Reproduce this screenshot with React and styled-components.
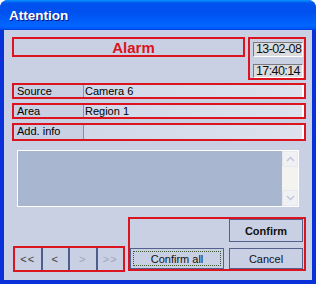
import React from 'react'
import styled, { createGlobalStyle } from 'styled-components'

const GlobalStyle = createGlobalStyle`
  body {
    margin: 0;
    background: #ffffff;
    font-family: "Liberation Sans", Arial, sans-serif;
  }
`

const RED = '#dc1420'
const BG = '#c9d0e3'

const Window = styled.div`
  width: 316px;
  height: 284px;
  display: flex;
  flex-direction: column;
  border-radius: 8px 8px 0 0;
  overflow: hidden;
  background: #0831d9;
`

const TitleBar = styled.div`
  height: 30px;
  flex: none;
  display: flex;
  align-items: center;
  padding: 1px 0 0 9px;
  box-sizing: border-box;
  background: linear-gradient(180deg, #0997ff 0%, #0053ee 10%, #0050ee 40%, #0066ff 85%, #005bff 94%, #003dd7 100%);
  color: #fff;
  font-weight: bold;
  font-size: 13.5px;
  text-shadow: 1px 1px #0f1089;
`

const Client = styled.div`
  flex: 1;
  margin: 0 4px 4px;
  background: ${BG};
  display: flex;
  flex-direction: column;
  padding: 7px 6px 9px 8px;
  font-size: 11px;
  color: #000;
`

const TopRow = styled.div`
  display: flex;
  gap: 3px;
  height: 43px;
`

const AlarmBox = styled.div`
  width: 233px;
  height: 20px;
  box-sizing: border-box;
  border: 2px solid ${RED};
  display: flex;
  align-items: center;
  justify-content: center;
  padding-left: 10px;
  color: ${RED};
  font-weight: bold;
  font-size: 15px;
`

const DateBox = styled.div`
  flex: 1;
  box-sizing: border-box;
  border: 2px solid ${RED};
  display: flex;
  flex-direction: column;
  gap: 7px;
  padding: 3px 1px 0 3px;
`

const DateField = styled.div`
  height: 15px;
  box-sizing: border-box;
  border-top: 1px solid #7a7a7a;
  border-left: 1px solid #7a7a7a;
  border-right: 1px solid #ffffff;
  border-bottom: 1px solid #ffffff;
  background: #dadbdf;
  font-size: 12.5px;
  letter-spacing: -0.6px;
  line-height: 13px;
  padding-left: 2px;
  white-space: nowrap;
  overflow: hidden;
  color: #111;
`

const Rows = styled.div`
  display: flex;
  flex-direction: column;
  gap: 4px;
  margin-top: 3px;
`

const Row = styled.div`
  height: ${p => p.$h}px;
  box-sizing: border-box;
  border: 2px solid ${RED};
  display: grid;
  grid-template-columns: 69px 1fr;
`

const Label = styled.div`
  padding-left: 3px;
  line-height: 12px;
`

const Value = styled.div`
  border-left: 1px solid #8e8f96;
  border-right: 2px solid #ffffff;
  background: linear-gradient(90deg, #d2d8e8 0%, #dde2ee 100%);
  padding-left: 1px;
  line-height: 12px;
`

const Memo = styled.div`
  margin: 9px 7px 0 5px;
  height: 57px;
  box-sizing: border-box;
  border: 1px solid #ffffff;
  background: #a9b6cf;
  display: flex;
  justify-content: flex-end;
`

const ScrollBar = styled.div`
  width: 16px;
  background: #f3f3ef;
  display: flex;
  flex-direction: column;
  justify-content: space-between;
`

const ScrollButton = styled.div`
  height: 16px;
  box-sizing: border-box;
  border: 1px solid #e6e8ee;
  border-radius: 2px;
  background: #f0f1f5;
  display: flex;
  align-items: center;
  justify-content: center;
`

const BottomRow = styled.div`
  margin-top: auto;
  display: flex;
  align-items: flex-end;
  gap: 3px;
  padding-left: 1px;
`

const NavGroup = styled.div`
  width: 112px;
  height: 26px;
  box-sizing: border-box;
  border: 2px solid ${RED};
  display: flex;
  margin-bottom: -1px;
`

const NavButton = styled.div`
  flex: 1;
  display: flex;
  align-items: center;
  justify-content: center;
  border-left: 2px solid #4d5e8c;
  &:first-child { border-left: none; }
  color: ${p => (p.$disabled ? '#9ea6ba' : '#3c3c3c')};
  font-size: 11px;
  letter-spacing: 1px;
`

const ActionGroup = styled.div`
  width: 178px;
  height: 54px;
  box-sizing: border-box;
  border: 2px solid ${RED};
  padding-right: 1px;
  display: grid;
  grid-template-columns: 94px 74px;
  grid-template-rows: 23px 21px;
  column-gap: 5px;
  row-gap: 6px;
`

const Button = styled.div`
  grid-column: ${p => p.$col};
  grid-row: ${p => p.$row};
  box-sizing: border-box;
  border: 1px solid #52628c;
  display: flex;
  align-items: center;
  justify-content: center;
  font-size: 11px;
  font-weight: ${p => (p.$bold ? 'bold' : 'normal')};
  color: #111;
  position: relative;
  ${p => p.$focus && `
    &::after {
      content: '';
      position: absolute;
      inset: 2px;
      border: 1px dotted #3d5a2e;
    }
  `}
`

const Chevron = ({ up }) => (
  <svg width="9" height="6" viewBox="0 0 9 6">
    <path d={up ? 'M1 5 L4.5 1.5 L8 5' : 'M1 1 L4.5 4.5 L8 1'} fill="none" stroke="#c4cad8" strokeWidth="1.6" />
  </svg>
)

const App = () => (
  <>
    <GlobalStyle />
    <Window>
      <TitleBar>Attention</TitleBar>
      <Client>
        <TopRow>
          <AlarmBox>Alarm</AlarmBox>
          <DateBox>
            <DateField>13-02-08</DateField>
            <DateField>17:40:14</DateField>
          </DateBox>
        </TopRow>
        <Rows>
          <Row $h={16}><Label>Source</Label><Value>Camera 6</Value></Row>
          <Row $h={16}><Label>Area</Label><Value>Region 1</Value></Row>
          <Row $h={18}><Label>Add. info</Label><Value /></Row>
        </Rows>
        <Memo>
          <ScrollBar>
            <ScrollButton><Chevron up /></ScrollButton>
            <ScrollButton><Chevron /></ScrollButton>
          </ScrollBar>
        </Memo>
        <BottomRow>
          <NavGroup>
            <NavButton>&lt;&lt;</NavButton>
            <NavButton>&lt;</NavButton>
            <NavButton $disabled>&gt;</NavButton>
            <NavButton $disabled>&gt;&gt;</NavButton>
          </NavGroup>
          <ActionGroup>
            <Button $col={2} $row={1} $bold>Confirm</Button>
            <Button $col={1} $row={2} $focus>Confirm all</Button>
            <Button $col={2} $row={2}>Cancel</Button>
          </ActionGroup>
        </BottomRow>
      </Client>
    </Window>
  </>
)

export default App
